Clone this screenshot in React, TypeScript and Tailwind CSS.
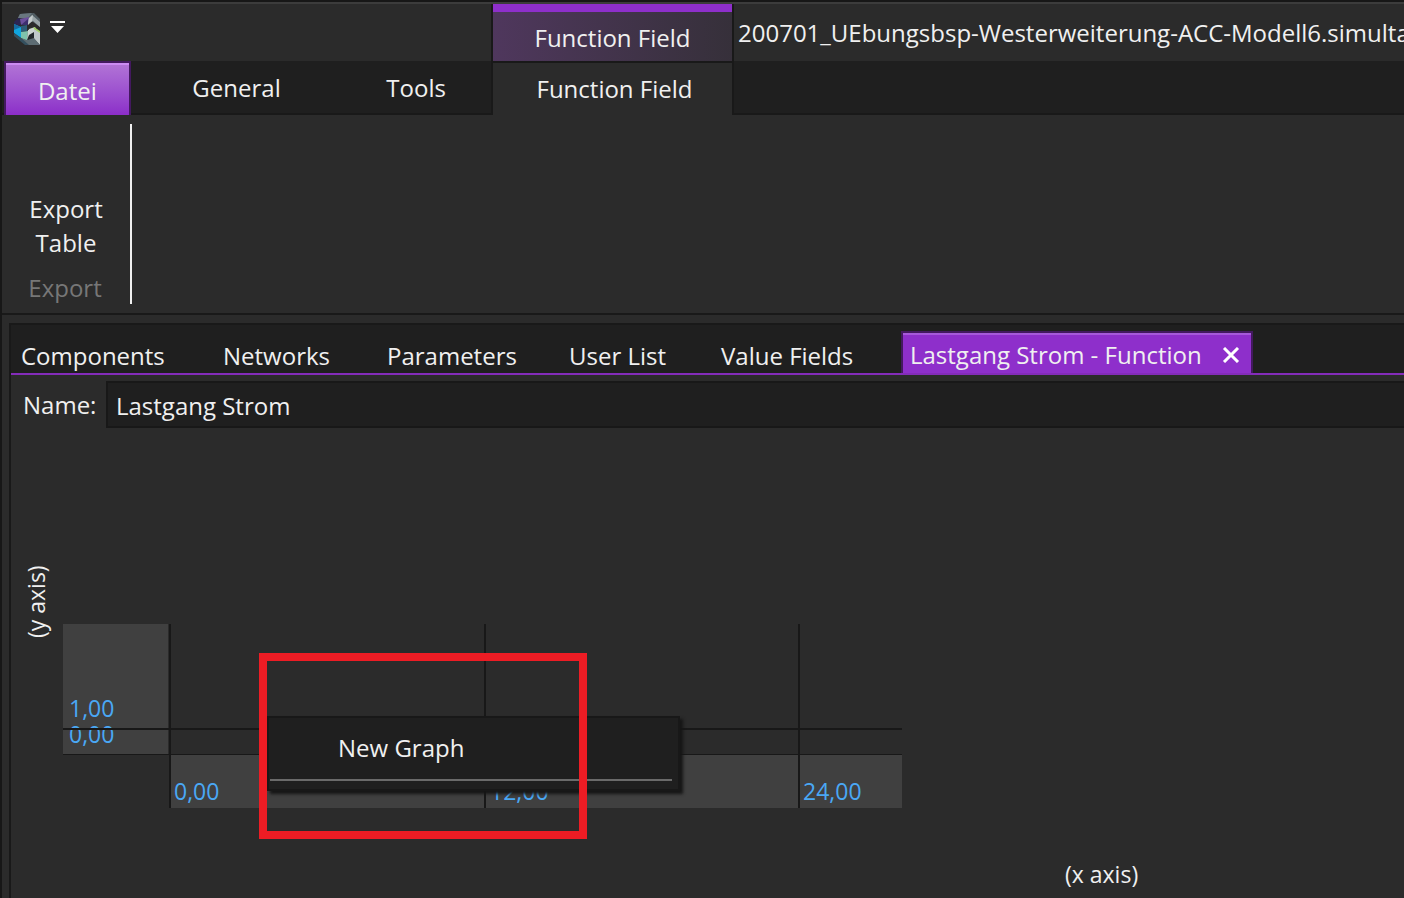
import React from "react";

const plainTabs = [
  { label: "Components", cell: "pl-[10px] w-[202px]" },
  { label: "Networks", cell: "pl-[10px] w-[164px]" },
  { label: "Parameters", cell: "pl-[10px] w-[182px]" },
  { label: "User List", cell: "pl-[10px] w-[152px]" },
  { label: "Value Fields", cell: "pl-[10px] w-[190px]" },
];

function Logo() {
  return (
    <svg width="26" height="32" viewBox="0 0 26 32" aria-hidden="true">
      <polygon points="6,1 20,0 26,6 26,14 19,9 13,6 4,5" fill="#515d63" />
      <polygon points="6,1 18,0 14,5 4,5" fill="#69777f" />
      <polygon points="18,2 26,9 26,14 19,8 14,11 14,6" fill="#99a4a7" />
      <polygon points="14,6 19,2 18,8 14,12" fill="#c3cacb" />
      <polygon points="0,9 4,5 7,6 6,12 1,14" fill="#2b2553" />
      <polygon points="6,6 15,4 14,10 7,12" fill="#6c4f9c" />
      <polygon points="7,12 14,6 14,12" fill="#3d2f6d" />
      <polygon points="0,11 7,14 7,25 0,20" fill="#10a5df" />
      <polygon points="0,11 7,14 0,17" fill="#176aa0" />
      <polygon points="7,13 13,12 13,18 7,19" fill="#2d5d78" />
      <polygon points="7,19 14,18 13,28 7,25" fill="#7fc3ac" />
      <polygon points="0,20 7,25 16,32 11,32 0,23" fill="#34505f" />
      <polygon points="15,16 21,14 24,19 15,22" fill="#c5cfc6" />
      <polygon points="20,14 26,18 26,21 19,16" fill="#9fcf61" />
      <polygon points="14,17 20,15 20,21 13,27" fill="#ccd5d1" />
      <polygon points="20,16 26,20 26,32 20,26" fill="#c0c9ca" />
      <polygon points="7,25 13,27 20,25 26,32 15,32" fill="#5d6c73" />
      <polygon points="15,22 20,19 20,24 13,27" fill="#22282b" />
    </svg>
  );
}

function Ribbon() {
  return (
    <header className="border-b-2 border-[#191919]">
      <div className="flex h-[57px]">
        <div className="flex w-[491px] shrink-0 items-start border-r-2 border-[#191919] pl-3 pt-[9px]">
          <Logo />
          <button type="button" aria-label="Customize quick access" className="ml-[10px] mt-[8px]">
            <svg width="16" height="13" viewBox="0 0 16 13" aria-hidden="true">
              <path d="M0 0H15V2H0ZM1 5H14L7.5 12Z" fill="#fff" />
            </svg>
          </button>
        </div>
        <div className="flex w-[239px] shrink-0 items-center justify-center border-t-8 border-[#8e2fcb] bg-linear-to-r from-[#4f375d] to-[#36303a] pt-[2px]">
          Function Field
        </div>
        <h1 className="flex-1 overflow-hidden whitespace-nowrap border-l-2 border-[#191919] pl-1 pt-[14px]">
          200701_UEbungsbsp-Westerweiterung-ACC-Modell6.simultan
        </h1>
      </div>
      <nav className="flex h-[54px]">
        <div className="flex w-[491px] shrink-0 border-b-2 border-r-2 border-[#191919] bg-[#1f1f1f]">
          <button
            type="button"
            className="-mb-[2px] ml-[2px] w-[127px] border-x-2 border-t-2 border-[#43195f] bg-linear-to-b from-[#b274d6] to-[#8c2dc9] pt-1 shadow-[inset_0_2px_0_#cb8bf2]"
          >
            Datei
          </button>
          <button type="button" className="ml-[31px] w-[150px] pt-[2px]">
            General
          </button>
          <button type="button" className="ml-[30px] w-[150px] pt-[2px]">
            Tools
          </button>
        </div>
        <button type="button" className="w-[239px] shrink-0 border-t-2 border-[#191919] pl-1">
          Function Field
        </button>
        <div className="flex-1 border-b-2 border-l-2 border-[#191919] bg-[#1f1f1f]" />
      </nav>
      <div className="flex h-[198px] pb-[9px] pt-[9px]">
        <section className="flex w-[130px] flex-col items-center justify-end border-r-2 border-[#f0f0f0]">
          <button type="button" className="w-[100px] text-center leading-[34px]">
            Export Table
          </button>
          <h2 className="-mb-px mt-[11px] pr-[2px] leading-[34px] text-[#777]">Export</h2>
        </section>
      </div>
    </header>
  );
}

function FieldChart() {
  return (
    <svg width="840" height="184" viewBox="0 0 840 184" className="block text-[23px]" role="img" aria-label="Function field">
      <rect x="0" y="0" width="105" height="130" fill="#404040" />
      <rect x="108" y="131" width="731" height="53" fill="#404040" />
      <g fill="#4aa8f5">
        <text x="6" y="93">1,00</text>
        <text x="6" y="119">0,00</text>
        <text x="111" y="176">0,00</text>
        <text x="427" y="176">12,00</text>
        <text x="740" y="176">24,00</text>
      </g>
      <g fill="#181818">
        <rect x="106" y="0" width="2" height="184" />
        <rect x="421" y="0" width="2" height="184" />
        <rect x="735" y="0" width="2" height="184" />
        <rect x="0" y="104" width="839" height="2" />
        <rect x="0" y="130" width="839" height="1" />
      </g>
    </svg>
  );
}

export default function App() {
  return (
    <div className="flex min-h-screen flex-col overflow-hidden border-l-2 border-t-2 border-[#171717] bg-[#2b2b2b] font-['Open_Sans','Noto_Sans',sans-serif] text-[24px] leading-[30px] text-[#f0f0f0]">
      <div className="h-[2px] bg-[#3c3c3c]" />
      <Ribbon />
      <main className="ml-[7px] mt-2 flex flex-1 flex-col border-l-2 border-t-2 border-[#191919]">
        <div className="flex h-[50px] items-end border-b-2 border-[#842cba] bg-[#1f1f1f]">
          {plainTabs.map((t) => (
            <button key={t.label} type="button" className={"h-[34px] shrink-0 whitespace-nowrap text-left " + t.cell}>
              {t.label}
            </button>
          ))}
          <div className="flex h-[42px] w-[352px] items-center border-x-2 border-t-2 border-[#43195f] bg-[#8e2fcb] pl-[7px] pt-1 shadow-[inset_0_2px_0_#a659da]">
            <button type="button" className="whitespace-nowrap">Lastgang Strom - Function</button>
            <button type="button" aria-label="Close tab" className="ml-auto mr-[11px]">
              <svg width="18" height="16" viewBox="0 0 18 16" aria-hidden="true">
                <path d="M2 1L16 15M16 1L2 15" stroke="#fff" strokeWidth="3" />
              </svg>
            </button>
          </div>
        </div>
        <div className="mt-[6px] flex h-[47px] items-center">
          <label htmlFor="field-name" className="w-[95px] shrink-0 pl-3">
            Name:
          </label>
          <input
            id="field-name"
            defaultValue="Lastgang Strom"
            className="h-full min-w-0 flex-1 border-y-2 border-l-2 border-[#181818] bg-[#1f1f1f] pl-2 pt-px outline-none"
          />
        </div>
        <div className="relative flex flex-1 flex-col pt-[134px]">
          <div className="flex">
            <div className="flex w-[52px] shrink-0 justify-center pr-[2px]">
              <span className="h-[76px] rotate-180 whitespace-nowrap text-[23px] [writing-mode:vertical-rl]">(y axis)</span>
            </div>
            <div className="pt-[62px]">
              <FieldChart />
            </div>
          </div>
          <div className="mt-[51px] pl-[1054px] text-[23px]">(x axis)</div>
          <div className="absolute left-[256px] top-[288px] h-[75px] w-[413px] border-2 border-[#181818] bg-[#1f1f1f] shadow-[3px_3px_3px_#151515]">
            <button type="button" className="h-[61px] w-full pb-[2px] pl-[69px] text-left">
              New Graph
            </button>
            <hr className="ml-px mr-[6px] border-t-2 border-[#6a6a6a]" />
          </div>
          <div className="pointer-events-none absolute left-[248px] top-[225px] h-[186px] w-[328px] border-8 border-[#ed1c24]" />
        </div>
      </main>
    </div>
  );
}
